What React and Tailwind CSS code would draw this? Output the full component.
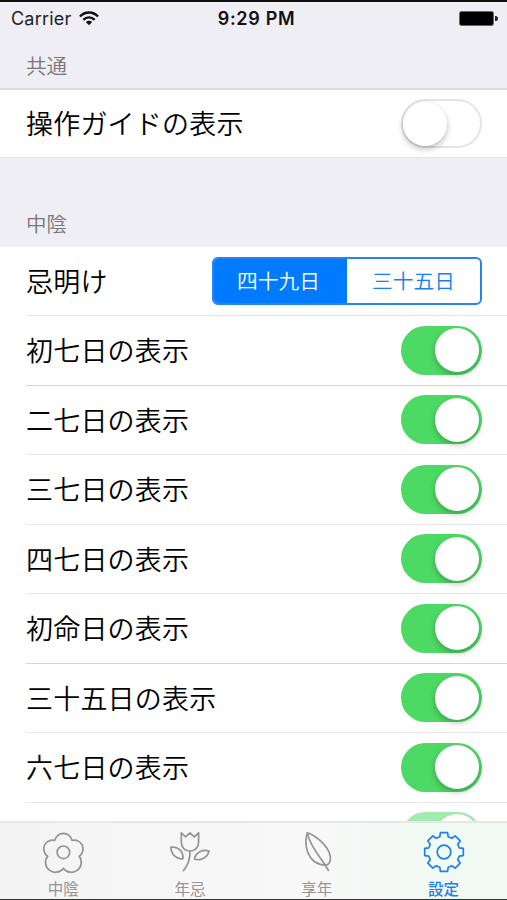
import { useState } from "react";

const rows = [
  { id: "shonanoka", label: "初七日の表示" },
  { id: "futananoka", label: "二七日の表示" },
  { id: "minanoka", label: "三七日の表示" },
  { id: "yonanoka", label: "四七日の表示" },
  { id: "shomeinichi", label: "初命日の表示" },
  { id: "sanjugonichi", label: "三十五日の表示" },
  { id: "munanoka", label: "六七日の表示" },
];

// outline of an eight tooth gear centred on 22,22
const gearPath = () => {
  const points = [];
  for (let i = 0; i < 8; i++) {
    const a = (i * Math.PI) / 4;
    const tooth = [[-4.2, -15.2], [-3.6, -19.3], [3.6, -19.3], [4.2, -15.2]];
    tooth.forEach(([x, y]) => {
      const px = 22 + x * Math.cos(a) - y * Math.sin(a);
      const py = 22 + x * Math.sin(a) + y * Math.cos(a);
      points.push(`${px.toFixed(2)} ${py.toFixed(2)}`);
    });
  }
  return `M${points.join("L")}Z`;
};

function Icon({ children }) {
  return (
    <svg className="w-11 h-11" viewBox="0 0 44 44" fill="none" stroke="currentColor" strokeWidth="1.7" strokeLinejoin="round">
      {children}
    </svg>
  );
}

const tabs = [
  {
    label: "中陰",
    icon: (
      <Icon>
        <path d="M13.8 10.4A8.8 8.8 0 0 1 31 10.4A8.8 8.8 0 0 1 38.2 26.2A9.9 9.9 0 0 1 22.4 38.4A9.9 9.9 0 0 1 6.6 26.2A8.8 8.8 0 0 1 13.8 10.4Z" />
        <circle cx="22.4" cy="22.3" r="6.3" />
      </Icon>
    ),
  },
  {
    label: "年忌",
    icon: (
      <Icon>
        <path d="M13.3 2.8L17.6 6.8L22 2.8L26.3 6.8L30.6 2.8V12C30.6 17.5 27 21 22 21S13.3 17.5 13.3 12Z" />
        <path d="M22 21C22.3 29 20 35.5 15 41.3" />
        <path d="M2.8 17.3C9.5 16 15.5 21 15 28.7C8.5 29.5 3.5 25 2.8 17.3Z" />
        <path d="M41 21C35 19.3 27.5 22 26.5 29.3C33 31 39.5 27.5 41 21Z" />
      </Icon>
    ),
  },
  {
    label: "享年",
    icon: (
      <Icon>
        <path d="M12.2 2.8C22 6.3 32.5 15.5 35 25C35.9 29 35.3 32.5 33 34.3C29 36.4 20.5 34 15.9 27.9C10.5 20.5 9.8 11.5 12.2 2.8Z" />
        <path d="M12.2 2.8C15 17 27 28.5 33.7 41" />
      </Icon>
    ),
  },
  {
    label: "設定",
    icon: (
      <Icon>
        <path d={gearPath()} />
        <circle cx="22" cy="22" r="6.8" />
      </Icon>
    ),
  },
];

function Switch({ on, onClick }) {
  return (
    <button
      role="switch"
      aria-checked={on}
      onClick={onClick}
      className={`flex items-center w-[81px] h-[49px] shrink-0 rounded-full ${
        on ? "bg-[#4cd964] justify-end pr-[3px]" : "bg-white border-2 border-[#e4e4e4]"
      }`}
    >
      <span className="w-11 h-11 rounded-full bg-white shadow-[0_3px_6px_rgba(0,0,0,0.26)]" />
    </button>
  );
}

function StatusBar() {
  return (
    <div className="grid grid-cols-3 items-center h-[35px] border-t-2 border-[#111] pl-[11px] pr-[9px] font-['Inter',sans-serif] text-[18px] text-[#111] shrink-0">
      <div className="flex items-center gap-2">
        <span className="text-[#222] tracking-[0.2px]">Carrier</span>
        <svg className="w-5 h-[15px]" viewBox="0 0 20 15" fill="none" stroke="currentColor" strokeWidth="2.4">
          <path d="M1 5.5C6 .2 14 .2 19 5.5" />
          <path d="M4.3 8.8C7.6 5.5 12.4 5.5 15.7 8.8" />
          <path d="M10 14.3L6.8 11.1C8.6 9.4 11.4 9.4 13.2 11.1Z" fill="currentColor" stroke="none" />
        </svg>
      </div>
      <span className="pl-1 text-center font-semibold whitespace-nowrap tracking-[0.7px]">9:29 PM</span>
      <div className="flex items-center justify-end gap-px">
        <span className="w-[35px] h-[15px] rounded-[2.5px] bg-black border border-[#666]" />
        <span className="w-[3px] h-[5px] rounded-r-full bg-[#222]" />
      </div>
    </div>
  );
}

function App() {
  const [guide, setGuide] = useState(false);
  const [period, setPeriod] = useState("四十九日");
  const [hidden, setHidden] = useState({});
  const [tab, setTab] = useState("設定");

  const toggle = (id) => setHidden({ ...hidden, [id]: !hidden[id] });

  return (
    <div className="flex flex-col w-[507px] h-[900px] overflow-hidden bg-[#efeef4] font-['Noto_Sans_CJK_JP',sans-serif] text-black">
      <StatusBar />

      <h2 className="flex items-end h-[55px] shrink-0 pl-[26px] pb-2 border-b-2 border-[#dddde1] text-[20.5px] leading-[30px] font-[350] text-[#77777c]">
        共通
      </h2>
      <div className="flex items-center justify-between h-[68px] shrink-0 pl-[26px] pr-[25px] bg-white border-b border-[#e4e4e8]">
        <span className="text-[27px] font-[350] tracking-[0.2px]">操作ガイドの表示</span>
        <Switch on={guide} onClick={() => setGuide(!guide)} />
      </div>

      <h2 className="flex items-end h-[89px] shrink-0 pl-[26px] pb-[9px] text-[20.5px] leading-[30px] font-[350] text-[#77777c]">
        中陰
      </h2>
      <div className="flex flex-col flex-1 min-h-0 overflow-hidden bg-white pl-[26px]">
        <div className="flex items-center justify-between h-[69px] shrink-0 pr-[25px] border-b border-[#e6e6e8]">
          <span className="text-[27px] font-[350] tracking-[0.2px]">忌明け</span>
          <div className="flex w-[270px] h-12 rounded-md border-2 border-[#2484f7] overflow-hidden bg-white">
            {["四十九日", "三十五日"].map((name) => (
              <button
                key={name}
                onClick={() => setPeriod(name)}
                className={`w-1/2 text-[20.7px] font-[350] ${
                  period === name ? "bg-[#007aff] text-white pr-1" : "text-[#147efb]"
                }`}
              >
                {name}
              </button>
            ))}
          </div>
        </div>
        {rows.map((row, i) => (
          <div
            key={row.id}
            className={`flex items-center justify-between h-[69.5px] shrink-0 pr-[25px] border-b ${
              i % 4 === 0 ? "border-[#d6d6d9]" : "border-[#e8e8ea]"
            }`}
          >
            <span className="text-[27px] font-[350] tracking-[0.2px]">{row.label}</span>
            <Switch on={!hidden[row.id]} onClick={() => toggle(row.id)} />
          </div>
        ))}
        {/* next row slides under the tab bar */}
        <div className="flex justify-end shrink-0 pr-[25px] pt-[9px] opacity-50">
          <Switch on />
        </div>
      </div>

      <nav className="grid grid-cols-4 h-[79px] shrink-0 border-t-2 border-t-[#e5e6e6] border-b border-b-[#333] bg-linear-to-r from-[#f4f4f4] via-[#f8f8f8] via-60% to-[#effaf1]">
        {tabs.map(({ label, icon }) => (
          <button
            key={label}
            onClick={() => setTab(label)}
            className={`flex flex-col items-center pt-[7px] ${
              tab === label ? "text-[#1c80ee] font-medium" : "text-[#949494]"
            }`}
          >
            {icon}
            <span className="mt-[3px] text-[15.5px] leading-[22px]">{label}</span>
          </button>
        ))}
      </nav>
    </div>
  );
}

export default App;
